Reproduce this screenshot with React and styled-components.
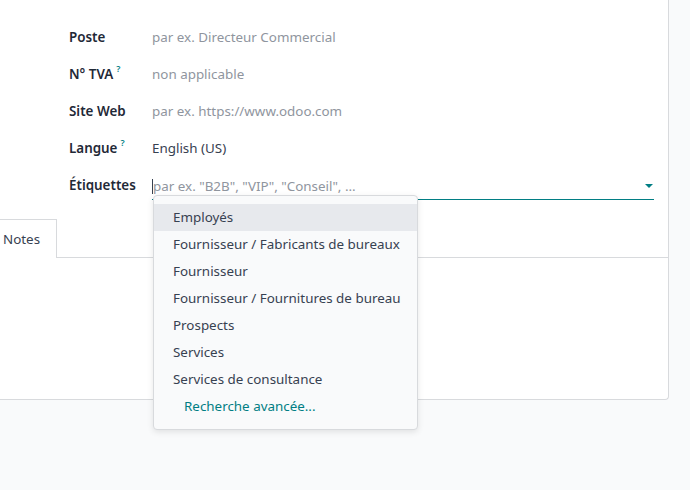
import React from "react";
import styled, { createGlobalStyle } from "styled-components";

const Global = createGlobalStyle`
  html, body { margin: 0; padding: 0; }
  body {
    background: #f9fafb;
    font-family: "Noto Sans", "Open Sans", sans-serif;
    font-size: 13.4px;
    color: #374151;
    width: 690px;
    height: 490px;
    overflow: hidden;
  }
`;

const Page = styled.div`
  width: 690px;
  height: 490px;
  background: #f9fafb;
  position: relative;
`;

const Sheet = styled.div`
  width: 670px;
  height: 400px;
  margin-left: -1px;
  background: #fff;
  border-right: 1px solid #d8dadd;
  border-bottom: 1px solid #d8dadd;
  border-bottom-right-radius: 4px;
  box-sizing: border-box;
  display: flex;
  flex-direction: column;
`;

const Form = styled.div`
  display: flex;
  flex-direction: column;
  padding: 18px 14px 0 70px;
`;

const Row = styled.div`
  display: flex;
  align-items: center;
  height: 37px;
`;

const Label = styled.div`
  width: 83px;
  font-weight: 600;
  color: #1f2937;
  white-space: nowrap;
`;

const Help = styled.sup`
  color: #017e84;
  font-size: 9px;
  font-weight: 600;
  margin-left: 3px;
  position: relative;
  top: -2px;
`;

const Value = styled.div`
  flex: 1;
  color: ${(p) => (p.$placeholder ? "#8f959e" : "#374151")};
  white-space: nowrap;
`;

const TagInput = styled.div`
  flex: 1;
  display: flex;
  align-items: center;
  height: 26px;
  margin-top: 4px;
  border-bottom: 1px solid #017e84;
  color: #8f959e;
`;

const Caret = styled.span`
  width: 1px;
  height: 15px;
  background: #374151;
`;

const Arrow = styled.span`
  margin-left: auto;
  margin-right: 1px;
  width: 0;
  height: 0;
  border-left: 4px solid transparent;
  border-right: 4px solid transparent;
  border-top: 4px solid #017e84;
`;

const Tabs = styled.div`
  display: flex;
  margin-top: 16px;
  border-bottom: 1px solid #d8dadd;
`;

const Tab = styled.div`
  height: 39px;
  box-sizing: border-box;
  padding: 0 16px 0 4px;
  display: flex;
  align-items: center;
  border: 1px solid #d8dadd;
  border-left: none;
  border-bottom: none;
  background: #fff;
  margin-bottom: -1px;
  color: #374151;
`;

const Menu = styled.ul`
  position: absolute;
  left: 153px;
  top: 195px;
  width: 265px;
  margin: 0;
  padding: 8px 0 9px;
  list-style: none;
  background: #f9fafb;
  border: 1px solid #d8dadd;
  border-radius: 4px;
  box-shadow: 0 2px 6px rgba(0, 0, 0, 0.1);
  box-sizing: border-box;
`;

const Item = styled.li`
  height: 27px;
  display: flex;
  align-items: center;
  padding-left: ${(p) => (p.$link ? "30px" : "19px")};
  padding-bottom: 2px;
  box-sizing: border-box;
  background: ${(p) => (p.$active ? "#e7e9ed" : "transparent")};
  color: ${(p) => (p.$link ? "#017e84" : "#374151")};
  white-space: nowrap;
`;

const fields = [
  { label: "Poste", value: "par ex. Directeur Commercial", placeholder: true },
  { label: "N° TVA", help: true, value: "non applicable", placeholder: true },
  { label: "Site Web", value: "par ex. https://www.odoo.com", placeholder: true },
  { label: "Langue", help: true, value: "English (US)" },
];

const tags = [
  "Employés",
  "Fournisseur / Fabricants de bureaux",
  "Fournisseur",
  "Fournisseur / Fournitures de bureau",
  "Prospects",
  "Services",
  "Services de consultance",
];

export default function App() {
  return (
    <Page>
      <Global />
      <Sheet>
        <Form>
          {fields.map((f) => (
            <Row key={f.label}>
              <Label>
                {f.label}
                {f.help && <Help>?</Help>}
              </Label>
              <Value $placeholder={f.placeholder}>{f.value}</Value>
            </Row>
          ))}
          <Row>
            <Label>Étiquettes</Label>
            <TagInput>
              <Caret />
              par ex. "B2B", "VIP", "Conseil", ...
              <Arrow />
            </TagInput>
          </Row>
        </Form>
        <Tabs>
          <Tab>Notes</Tab>
        </Tabs>
      </Sheet>
      <Menu>
        {tags.map((t, i) => (
          <Item key={t} $active={i === 0}>
            {t}
          </Item>
        ))}
        <Item $link>Recherche avancée...</Item>
      </Menu>
    </Page>
  );
}
